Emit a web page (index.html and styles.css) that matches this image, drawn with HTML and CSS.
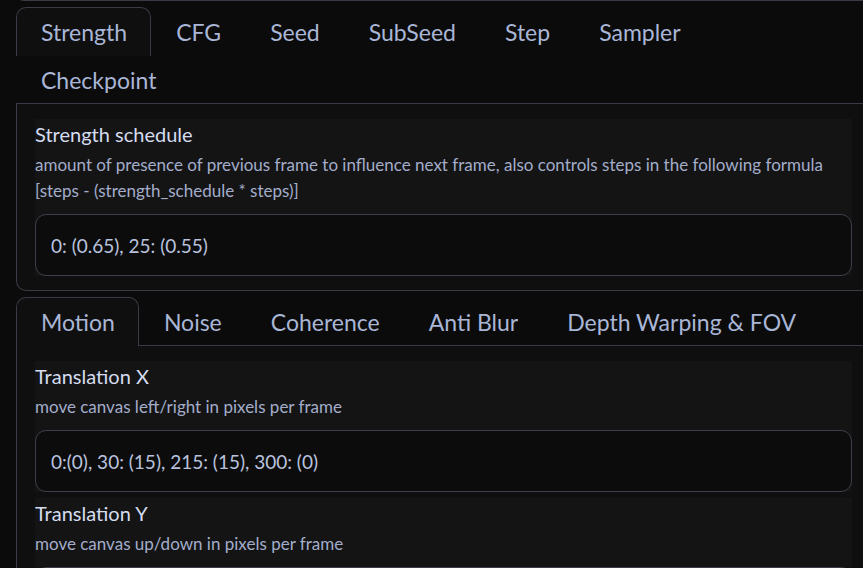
FILE: index.html
```html
<!DOCTYPE html>
<html lang="en">
<head>
<meta charset="utf-8">
<title>Deforum keyframes</title>
<link rel="stylesheet" href="styles.css">
</head>
<body>
<div class="page">
  <div class="prev"></div>

  <div class="tabs">
    <div class="tab-nav">
      <button class="tab selected">Strength</button>
      <button class="tab">CFG</button>
      <button class="tab">Seed</button>
      <button class="tab">SubSeed</button>
      <button class="tab">Step</button>
      <button class="tab">Sampler</button>
      <div class="break"></div>
      <button class="tab">Checkpoint</button>
    </div>
    <div class="tab-panel">
      <div class="block">
        <div class="label">Strength schedule</div>
        <div class="info">amount of presence of previous frame to influence next frame, also controls steps in the following formula [steps - (strength_schedule * steps)]</div>
        <div class="input">0: (0.65), 25: (0.55)</div>
      </div>
    </div>
  </div>

  <div class="tabs">
    <div class="tab-nav">
      <button class="tab selected">Motion</button>
      <button class="tab">Noise</button>
      <button class="tab">Coherence</button>
      <button class="tab">Anti Blur</button>
      <button class="tab">Depth Warping &amp; FOV</button>
    </div>
    <div class="tab-panel">
      <div class="block">
        <div class="label">Translation X</div>
        <div class="info">move canvas left/right in pixels per frame</div>
        <div class="input">0:(0), 30: (15), 215: (15), 300: (0)</div>
      </div>
      <div class="block">
        <div class="label">Translation Y</div>
        <div class="info">move canvas up/down in pixels per frame</div>
        <div class="input">0:(0)</div>
      </div>
    </div>
  </div>
</div>
</body>
</html>
```

FILE: styles.css
```css
html, body {
  margin: 0;
  padding: 0;
  background: #0b0b0b;
  overflow: hidden;
  height: 100%;
}

body {
  font-family: "Lato", "Liberation Sans", sans-serif;
  color: #b4bedb;
}

.page {
  width: 855px;
  padding-left: 16px;
  display: flex;
  flex-direction: column;
  gap: 6px;
}

.prev {
  height: 8px;
  margin-top: -8px;
  border: 1px solid #3b3b45;
  border-top: none;
  border-radius: 0 0 8px 8px;
  margin-right: -20px;
}

.tabs {
  display: flex;
  flex-direction: column;
}

.tab-nav {
  display: flex;
  flex-wrap: wrap;
  border-bottom: 1px solid #3b3b45;
}

.break {
  flex-basis: 100%;
  height: 0;
}

.tab {
  font-family: inherit;
  font-size: 23px;
  color: #a9b6d6;
  background: transparent;
  border: 1px solid transparent;
  border-bottom: none;
  border-radius: 10px 10px 0 0;
  padding: 0 23px 0 24px;
  height: 48px;
  margin: 0;
  cursor: pointer;
}

.tab.selected {
  background: #0f0f10;
  border-color: #3b3b45;
  margin-bottom: -1px;
  height: 49px;
}

.tab-panel {
  background: #0f0f10;
  border: 1px solid #3b3b45;
  border-top: none;
  border-radius: 0 0 10px 10px;
  padding: 15px 18px 14px 18px;
  display: flex;
  flex-direction: column;
  gap: 6px;
}

.block {
  background: #141415;
  display: flex;
  flex-direction: column;
}

.label {
  font-size: 20px;
  line-height: 31px;
  color: #d5dcf0;
}

.info {
  font-size: 17px;
  line-height: 26px;
  margin-top: 2px;
  color: #a3adca;
}

.input {
  box-sizing: border-box;
  margin-top: 10px;
  height: 62px;
  border: 1px solid #3e3e48;
  border-radius: 11px;
  background: #0c0c0d;
  padding: 0 15px;
  display: flex;
  align-items: center;
  font-size: 19px;
  color: #b9c3de;
}
```
